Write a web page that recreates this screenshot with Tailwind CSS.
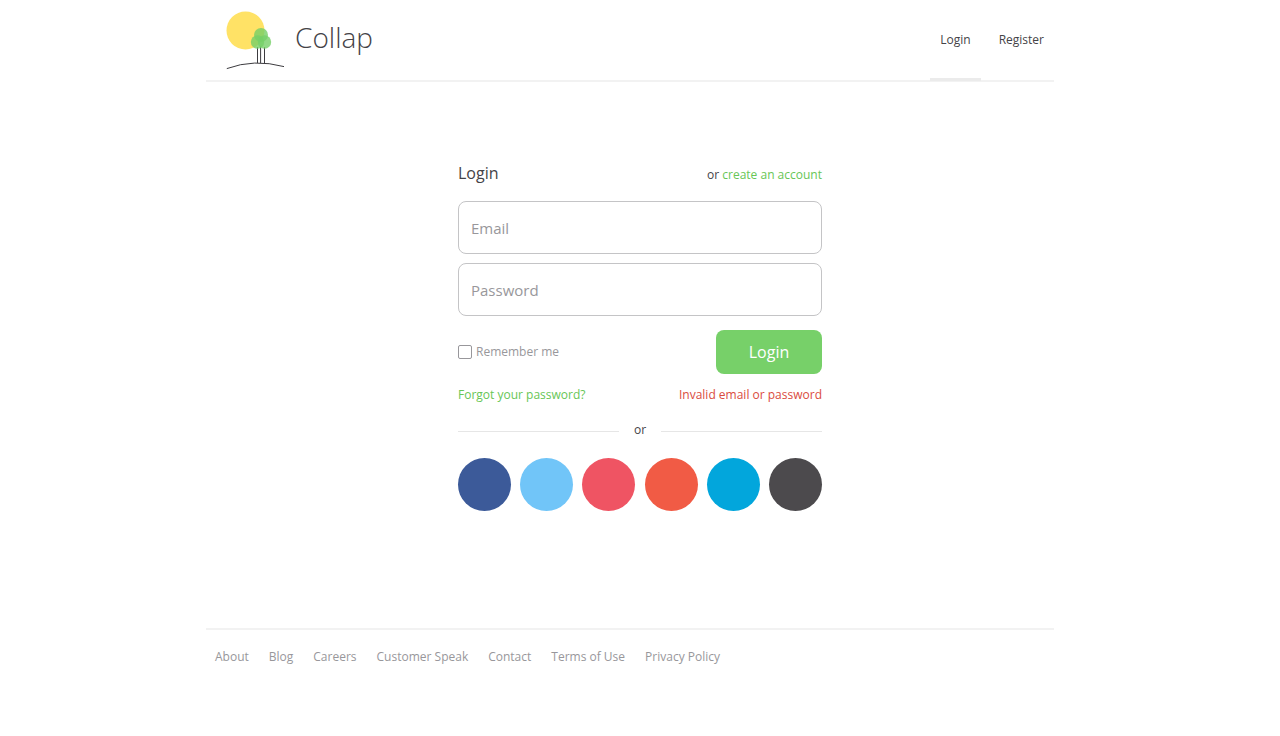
<!DOCTYPE html>
<html lang="en">
<head>
<meta charset="utf-8">
<meta name="viewport" content="width=device-width, initial-scale=1">
<title>Collap – Login</title>
<script src="https://cdn.jsdelivr.net/npm/@tailwindcss/browser@4"></script>
</head>
<body class="bg-white font-['Open_Sans',sans-serif] text-xs leading-[22px] text-[#444347]">
  <div class="pr-5">
    <header class="mx-auto flex h-[82px] max-w-[848px] justify-between border-b-2 border-[#f2f2f2]">
      <a href="#" class="flex items-start gap-[9px] pl-5">
        <svg class="mt-2 h-16 w-[60px]" viewBox="0 0 60 64" fill="none" aria-hidden="true">
          <circle cx="19.5" cy="22.5" r="19" fill="#ffe266"/>
          <g stroke="#3c3b3f" stroke-width="1">
            <path d="M31.500 39v16M34.600 38v17M38.500 39v16"/>
            <path d="M.8 60.600Q28 50.500 58 58.600"/>
          </g>
          <g fill="#75d068" fill-opacity=".8">
            <circle cx="35" cy="27" r="7"/>
            <circle cx="31.500" cy="34" r="6.700"/>
            <circle cx="38.500" cy="34" r="6.700"/>
          </g>
        </svg>
        <span class="pt-[17px] text-[28px] leading-10 font-light">Collap</span>
      </a>
      <nav class="-mb-px flex gap-2">
        <a href="#" class="border-b-3 border-[#ebebeb] px-[10px] pt-[29px]">Login</a>
        <a href="#" class="px-[10px] pt-[29px]">Register</a>
      </nav>
    </header>
  </div>

  <main class="mx-auto mt-20 w-full max-w-[364px]">
    <form>
      <div class="flex items-start justify-between">
        <h1 class="text-base leading-[22px]">Login</h1>
        <p class="pt-[2px]">or <a href="#" class="text-[#67c656]">create an account</a></p>
      </div>
      <div class="mt-[15px] flex flex-col gap-[9px]">
        <input type="email" aria-label="Email" placeholder="Email" class="h-[53px] w-full rounded-lg border border-[#c4c4c6] px-3 text-[15px] placeholder:text-[#98979b]">
        <input type="password" aria-label="Password" placeholder="Password" class="h-[53px] w-full rounded-lg border border-[#c4c4c6] px-3 text-[15px] placeholder:text-[#98979b]">
      </div>
      <div class="mt-[14px] flex items-center justify-between">
        <label class="flex items-center gap-1 text-[#98979b]">
          <input type="checkbox" class="size-[14px] appearance-none rounded-xs border border-[#98979b] checked:bg-[#77d069]">
          Remember me
        </label>
        <button type="submit" class="h-11 w-[106px] rounded-lg bg-[#77d069] text-base text-white">Login</button>
      </div>
      <div class="mt-[10px] flex justify-between">
        <a href="#" class="text-[#67c656]">Forgot your password?</a>
        <p class="text-[#da4b3e]" role="alert">Invalid email or password</p>
      </div>
    </form>
    <div class="mt-[13px] flex items-center gap-[15px]">
      <span class="mt-0.5 h-px flex-1 bg-[#e6e6e6]"></span>
      <span>or</span>
      <span class="mt-0.5 h-px flex-1 bg-[#e6e6e6]"></span>
    </div>
    <div class="mt-[17px] flex justify-between">
      <button type="button" aria-label="Facebook" class="size-[53px] rounded-full bg-[#3c5a99]"></button>
      <button type="button" aria-label="Twitter" class="size-[53px] rounded-full bg-[#71c5f8]"></button>
      <button type="button" aria-label="Pocket" class="size-[53px] rounded-full bg-[#ef5463]"></button>
      <button type="button" aria-label="Google" class="size-[53px] rounded-full bg-[#f15b45]"></button>
      <button type="button" aria-label="LinkedIn" class="size-[53px] rounded-full bg-[#02a6dc]"></button>
      <button type="button" aria-label="GitHub" class="size-[53px] rounded-full bg-[#4c4a4d]"></button>
    </div>
  </main>

  <div class="mt-[117px] pr-5">
    <footer class="mx-auto max-w-[848px] border-t-2 border-[#f2f2f2] px-[9px] pt-4 pb-10 text-[#98979b]">
      <nav class="flex flex-wrap gap-x-5">
        <a href="#">About</a>
        <a href="#">Blog</a>
        <a href="#">Careers</a>
        <a href="#">Customer Speak</a>
        <a href="#">Contact</a>
        <a href="#">Terms of Use</a>
        <a href="#">Privacy Policy</a>
      </nav>
    </footer>
  </div>
</body>
</html>
